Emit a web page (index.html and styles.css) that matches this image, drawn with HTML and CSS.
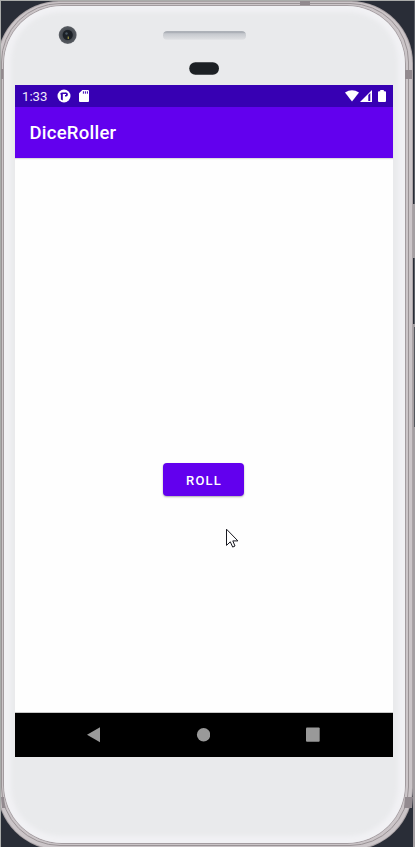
FILE: index.html
```html
<!DOCTYPE html>
<html lang="en">
<head>
<meta charset="utf-8">
<title>DiceRoller</title>
<link rel="stylesheet" href="styles.css">
</head>
<body>
<main class="phone">
  <svg class="chassis" viewBox="0 0 415 847" aria-hidden="true">
    <defs>
      <radialGradient id="lens"><stop offset="0" stop-color="#20252b"/><stop offset=".5" stop-color="#22272d"/><stop offset=".62" stop-color="#484d53"/><stop offset=".9" stop-color="#54585e"/><stop offset="1" stop-color="#777a7f"/></radialGradient>
      <linearGradient id="slot" x2="0" y2="1"><stop offset="0" stop-color="#969ba3"/><stop offset=".3" stop-color="#c6c9ce"/><stop offset="1" stop-color="#dfe0e3"/></linearGradient>
      <filter id="soft" x="-5%" y="-5%" width="110%" height="110%"><feGaussianBlur stdDeviation="2"/></filter>
      <clipPath id="faceClip"><rect x="4" y="6" width="401" height="837" rx="58"/></clipPath>
    </defs>
    <rect width="415" height="847" fill="#292d37"/>
    <path d="M414.5 0V847" stroke="#5b5e65"/>
    <path d="M413 204h2v54h-2zM413 324h2v523h-2z" fill="#a49fa2"/>
    <path d="M414.5 327V427" stroke="#55575d"/>
    <rect x="-3" y="1" width="416" height="849" rx="62" fill="#aaa3a6"/>
    <rect x="-2" y="2" width="414" height="847" rx="61" fill="#cbc5c8"/>
    <rect x="1.5" y="3.5" width="407" height="842" rx="58.5" fill="none" stroke="#9a9396"/>
    <rect x="3.5" y="5.5" width="402" height="838" rx="58.5" fill="none" stroke="#a29b9f"/>
    <rect x="4" y="6" width="401" height="837" rx="58" fill="#f1f1f4"/>
    <g clip-path="url(#faceClip)"><rect x="11" y="12" width="387" height="824" rx="50" fill="#e9eaec" filter="url(#soft)"/></g>
    <path d="M300 1h10v4h-10zM1 69h2v10H1zM405 70h7v9h-7zM1 797h3l1 11H2zM405 797h8l-1 11h-8z" fill="#928a8f"/>
    <path d="M.5 0V847" stroke="#a9abaa"/>
    <path d="M0 .5H415" stroke="#aaacaa"/>
    <circle cx="67.7" cy="35" r="9" fill="url(#lens)"/>
    <circle cx="67.7" cy="35" r="4.8" fill="#1b2026"/>
    <circle cx="66.5" cy="33.5" r="1.2" fill="#4a5661"/>
    <path d="M68.3 36.5v2.4" stroke="#89843e" stroke-width="1.4"/>
    <rect x="163" y="31.3" width="83" height="8.4" rx="4" fill="url(#slot)"/>
    <rect x="189.2" y="62.3" width="29.8" height="12.4" rx="6.2" fill="#1c2024"/>
  </svg>
  <section class="screen">
    <header class="status">
      <span class="clock">1:33</span>
      <svg class="icon-app" viewBox="0 0 14 14"><circle cx="7" cy="7" r="6.5" fill="#fff"/><path d="M3.2 4.6L4.8 3.5H8.5V5H5.8V11.6L3.9 10.6V6z" fill="#3700b3"/><path d="M8 3.5h1.2q1.7 0 1.7 2T9.2 7.5H8V6h1V5H8z" fill="#3700b3"/></svg>
      <svg class="icon-card" viewBox="0 0 10 12"><path d="M3.3 0H9a1 1 0 0 1 1 1v10a1 1 0 0 1-1 1H1a1 1 0 0 1-1-1V3.3z" fill="#fff"/><path d="M4.4 1.3v2.4M6.4 1.3v2.4M8.4 1.3v2.4" stroke="#3700b3"/></svg>
      <span class="gap"></span>
      <svg class="icon-wifi" viewBox="0 0 14 12"><path d="M0 2.6Q7-2.1 14 2.6L7 11.5z" fill="#fff"/></svg>
      <svg class="icon-signal" viewBox="0 0 12 12"><path d="M0 12L12 0v12z" fill="#fff"/><path d="M8.3 5l2-2V11h-2z" fill="#3700b3"/></svg>
      <svg class="icon-battery" viewBox="0 0 8 12"><path d="M2.2 0h3.6v1.2H7a1 1 0 0 1 1 1V11a1 1 0 0 1-1 1H1a1 1 0 0 1-1-1V2.2a1 1 0 0 1 1-1h1.2z" fill="#fff"/></svg>
    </header>
    <h1 class="title">DiceRoller</h1>
    <div class="content">
      <button class="roll">ROLL</button>
      <svg class="cursor" viewBox="0 0 14 21"><path d="M1.5 1.2V17.4L5.3 13.8L7.7 19.1L10 18L7.8 12.9H12.9z" fill="#fff" stroke="#181820" stroke-width="1"/></svg>
    </div>
    <nav class="nav">
      <svg viewBox="0 0 14 16"><path d="M14 .2v15L1 7.7z" fill="#999"/></svg>
      <svg viewBox="0 0 14 16"><circle cx="7.6" cy="7.7" r="6.7" fill="#999"/></svg>
      <svg viewBox="0 0 14 16"><rect y=".5" width="13.7" height="14.3" rx="1" fill="#999"/></svg>
    </nav>
  </section>
</main>
</body>
</html>
```
FILE: styles.css
```css
* { box-sizing: border-box; }
body { margin: 0; overflow: hidden; font-family: Roboto, sans-serif; }
.phone { position: relative; width: 415px; height: 847px; padding: 85px 22px 90px 15px; }
.chassis { position: absolute; inset: 0; width: 415px; height: 847px; }
.screen { position: relative; display: flex; flex-direction: column; width: 378px; height: 672px; background: #fefefe; }
.status { display: flex; align-items: center; height: 22px; padding: 0 7px; background: #3700b3; color: #f0eafb; flex: none; }
.clock { width: 35px; font-size: 13.2px; line-height: 22px; padding-top: 1px; }
.icon-app { width: 14px; height: 14px; }
.icon-card { width: 10px; height: 12px; margin-left: 8px; }
.gap { flex: 1; }
.icon-wifi { width: 14px; height: 12px; }
.icon-signal { width: 12px; height: 12px; margin-left: 1px; }
.icon-battery { width: 8px; height: 12px; margin-left: 6px; }
.title { flex: none; height: 51px; margin: 0; padding-left: 14.5px; background: #6200ee; color: #fff; font-size: 18.5px; font-weight: 500; letter-spacing: .25px; line-height: 53px; box-shadow: 0 1px 1px #ddd; }
.content { position: relative; flex: 1; display: flex; justify-content: center; align-items: flex-start; padding: 305px 1px 0 0; border-bottom: 1px solid #c8c8c8; }
.roll { width: 81px; height: 33px; border: 0; border-radius: 4px; padding: 1px 0 0 1px; background: #6200ee; color: #fff; font: 500 13px Roboto, sans-serif; letter-spacing: 1.2px; box-shadow: 0 1px 2px #aaa; }
.cursor { position: absolute; left: 210px; top: 370px; width: 14px; height: 21px; }
.nav { flex: none; display: flex; justify-content: space-between; align-items: center; height: 44px; padding: 0 73px 0 71px; background: #000; }
.nav svg { width: 14px; height: 16px; }
```
